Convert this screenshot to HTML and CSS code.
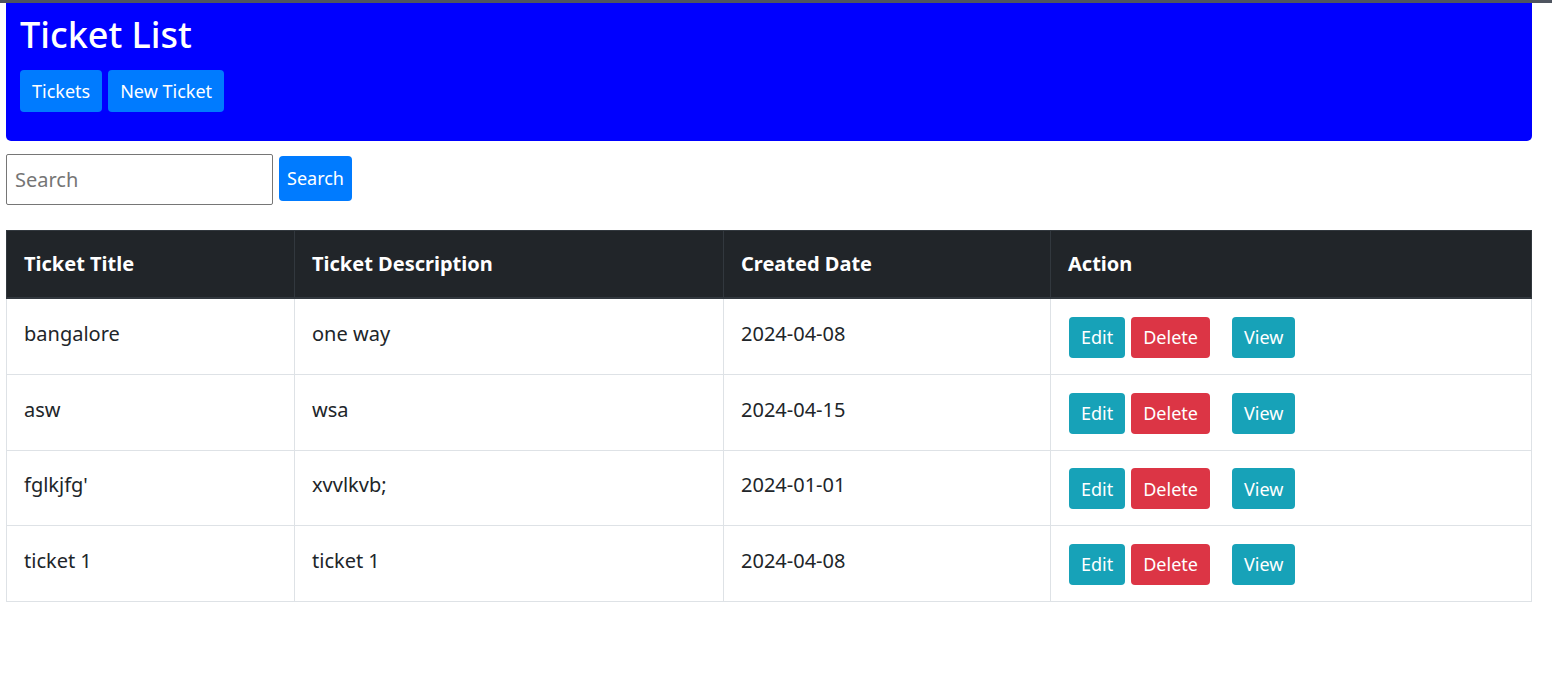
FILE: index.html
```html
<!DOCTYPE html>
<html>
<head>
<meta charset="utf-8">
<title>Ticket List</title>
<link rel="stylesheet" href="styles.css">
</head>
<body>
<div class="topbar"></div>
<div class="page">
  <header class="hero">
    <h1 class="hero-title">Ticket List</h1>
    <nav class="hero-nav">
      <a class="btn btn-primary btn-nav">Tickets</a>
      <a class="btn btn-primary btn-nav">New Ticket</a>
    </nav>
  </header>
  <form class="search">
    <input class="search-input" type="text" placeholder="Search">
    <button class="btn btn-primary btn-search" type="button">Search</button>
  </form>
  <table class="tickets">
    <thead>
      <tr>
        <th class="c1">Ticket Title</th>
        <th class="c2">Ticket Description</th>
        <th class="c3">Created Date</th>
        <th class="c4">Action</th>
      </tr>
    </thead>
    <tbody>
      <tr class="row-first">
        <td>bangalore</td><td>one way</td><td>2024-04-08</td>
        <td><div class="actions"><a class="btn btn-info">Edit</a><a class="btn btn-danger">Delete</a><a class="btn btn-info btn-view">View</a></div></td>
      </tr>
      <tr>
        <td>asw</td><td>wsa</td><td>2024-04-15</td>
        <td><div class="actions"><a class="btn btn-info">Edit</a><a class="btn btn-danger">Delete</a><a class="btn btn-info btn-view">View</a></div></td>
      </tr>
      <tr class="row-short">
        <td>fglkjfg'</td><td>xvvlkvb;</td><td>2024-01-01</td>
        <td><div class="actions"><a class="btn btn-info">Edit</a><a class="btn btn-danger">Delete</a><a class="btn btn-info btn-view">View</a></div></td>
      </tr>
      <tr>
        <td>ticket 1</td><td>ticket 1</td><td>2024-04-08</td>
        <td><div class="actions"><a class="btn btn-info">Edit</a><a class="btn btn-danger">Delete</a><a class="btn btn-info btn-view">View</a></div></td>
      </tr>
    </tbody>
  </table>
</div>
</body>
</html>
```

FILE: styles.css
```css
* { box-sizing: border-box; }
html, body { margin: 0; padding: 0; background: #fff; }
body {
  font-family: "Noto Sans", "Open Sans", "Liberation Sans", sans-serif;
  color: #212529;
}
.topbar { height: 3px; background: #4f5560; }
.page { margin: 0 20px 0 6px; }

.hero {
  background: #0000ff;
  color: #fff;
  padding: 10px 14px 29px;
  border-radius: 0 0 5px 5px;
  height: 138px;
}
.hero-title {
  margin: 0;
  font-size: 36px;
  font-weight: 500;
  line-height: 44px;
}
.hero-nav { display: flex; gap: 6px; margin-top: 13px; }

.btn {
  display: inline-flex;
  align-items: center;
  justify-content: center;
  border: none;
  border-radius: 4px;
  color: #fff;
  font-family: inherit;
  font-size: 18px;
  height: 41px;
  padding: 0 12px;
  cursor: pointer;
  text-decoration: none;
}
.btn-primary { background: #007bff; }
.btn-info { background: #17a2b8; }
.btn-danger { background: #dc3545; }
.btn-nav { height: 42px; }

.search { display: flex; align-items: center; gap: 6px; margin-top: 13px; }
.search-input {
  width: 267px;
  height: 51px;
  border: 1px solid #767676;
  border-radius: 2px;
  padding: 0 8px;
  font-family: inherit;
  font-size: 20px;
  color: #212529;
}
.search-input::placeholder { color: #757575; }
.btn-search { height: 45px; padding: 0 8px; font-size: 18px; margin-top: -3px; }

.tickets {
  margin-top: 25px;
  width: 100%;
  border-collapse: collapse;
  font-size: 20px;
}
.tickets th, .tickets td {
  text-align: left;
  padding: 0 17px;
  border: 1px solid #dee2e6;
  vertical-align: middle;
}
.tickets th {
  background: #212529;
  color: #fff;
  border-color: #32383e;
  border-bottom: 2px solid #32383e;
  height: 67px;
  font-weight: 700;
}
.tickets td { height: 76px; padding-bottom: 7px; }
.tickets .row-first td { height: 77px; padding-top: 1px; }
.tickets .row-short td { height: 75px; }
.c1 { width: 288px; }
.c2 { width: 429px; }
.c3 { width: 327px; }
.actions { display: flex; gap: 6px; padding-top: 8px; }
.actions .btn { padding: 0 12px; }
.actions .btn:first-child { margin-left: 1px; }
.btn-view { margin-left: 16px; }
```
